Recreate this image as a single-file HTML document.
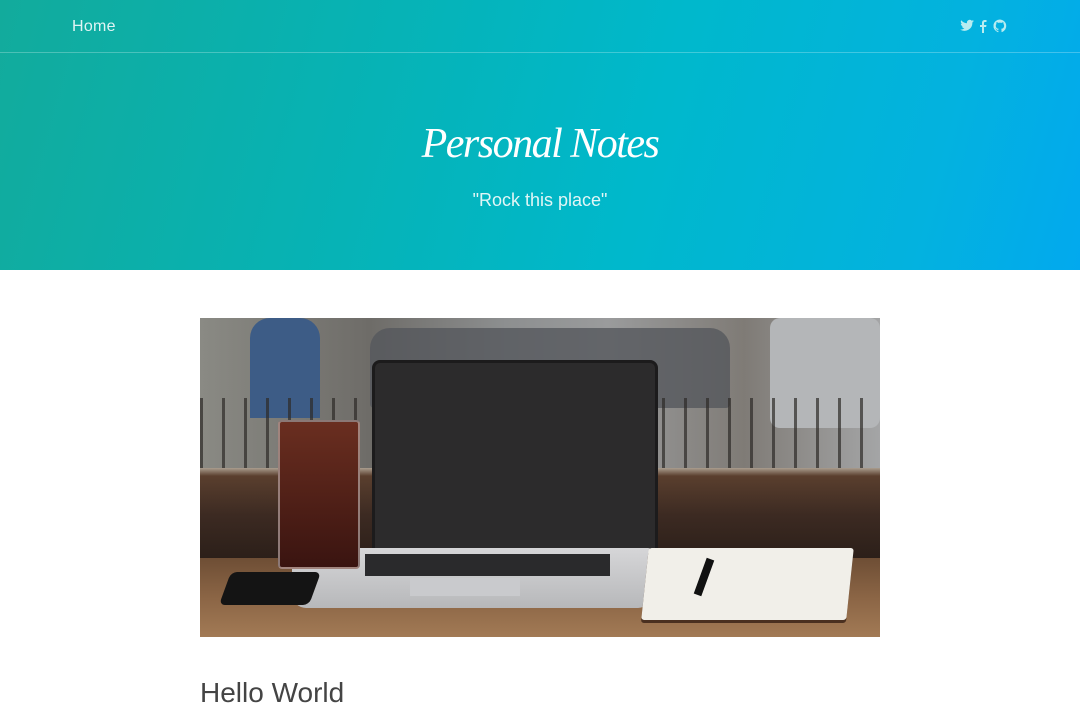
<!DOCTYPE html>
<html><head><meta charset="utf-8"><style>
body{margin:0;width:1080px;height:720px;overflow:hidden;background:#fff;font-family:"Liberation Sans",sans-serif}
.hd{position:absolute;left:0;top:0;width:1080px;height:270px;background:linear-gradient(105deg,#12ab9c 0%,#06b3b6 35%,#00b8cc 60%,#03b2df 85%,#02a9ee 100%)}
.nav{position:absolute;top:0;left:0;width:1080px;height:52px;border-bottom:1px solid rgba(255,255,255,.25)}
.home{position:absolute;left:72px;top:18px;color:#e0f4f4;font-size:16px;letter-spacing:.3px}
.t{position:absolute;left:0;width:1080px;text-align:center;color:#fff}
.img{position:absolute;left:200px;top:318px;width:680px;height:319px;overflow:hidden;background:#8a8580}
.img div{position:absolute}
</style></head><body>
<div class="hd">
<div class="nav"><div class="home">Home</div>
<svg style="position:absolute;left:960px;top:18px" width="50" height="16" viewBox="0 0 50 16" fill="#b8ecf0">
<path d="M14 3c-.5.2-1 .4-1.6.5.6-.4 1-.9 1.2-1.5-.5.3-1.1.5-1.8.7A2.8 2.8 0 0 0 7 5.2 8 8 0 0 1 1.2 2.2a2.8 2.8 0 0 0 .9 3.8c-.5 0-.9-.1-1.3-.4 0 1.4 1 2.5 2.3 2.8-.4.1-.9.1-1.3 0 .4 1.1 1.4 1.9 2.6 2A5.7 5.7 0 0 1 0 11.5 8 8 0 0 0 12.4 4.8V4.4c.6-.4 1.1-.9 1.6-1.4z"/>
<path d="M22 15V9h-2V7h2V5c0-2 1-3 3-3h1.5v2H25c-.8 0-1 .4-1 1v2h2.5l-.4 2H24v6z"/>
<path d="M40 1.5a6.5 6.5 0 0 0-2 12.7c.3 0 .4-.1.4-.3v-1.2c-1.8.4-2.2-.8-2.2-.8-.3-.8-.7-1-.7-1-.6-.4 0-.4 0-.4.6 0 1 .7 1 .7.6 1 1.5.7 1.9.5 0-.4.2-.7.4-.9-1.4-.2-3-.7-3-3.2 0-.7.3-1.3.7-1.7-.1-.2-.3-.8 0-1.7 0 0 .6-.2 1.8.7a6 6 0 0 1 3.2 0c1.2-.8 1.800-.7 1.8-.7.4.9.1 1.5.1 1.7.4.4.7 1 .7 1.7 0 2.5-1.5 3-3 3.2.2.2.4.6.4 1.2v1.8c0 .2.1.4.5.3A6.5 6.5 0 0 0 40 1.5z"/>
</svg></div>
<div class="t" style="top:120px;font-family:'Liberation Serif',serif;font-style:italic;font-size:42px;letter-spacing:-1.5px">Personal Notes</div>
<div class="t" style="top:190px;font-size:18px;color:#e2f6f6">"Rock this place"</div>
</div>
<div class="img">
<div style="left:0;top:0;width:680px;height:155px;background:linear-gradient(90deg,#8a8a84,#6e6c68 25%,#8d8f90 45%,#9a9b9c 60%,#7f7b76 80%,#a4a5a6)"></div>
<div style="left:170px;top:10px;width:360px;height:80px;background:#55585c;border-radius:20px 20px 4px 4px;opacity:.8"></div>
<div style="left:570px;top:0;width:110px;height:110px;background:#b4b6b8;border-radius:10px"></div>
<div style="left:50px;top:0;width:70px;height:100px;background:#3d5c86;border-radius:20px 20px 0 0"></div>
<div style="left:0;top:80px;width:680px;height:70px;background:repeating-linear-gradient(90deg,rgba(45,42,39,.7) 0 3px,transparent 3px 22px)"></div>
<div style="left:0;top:150px;width:680px;height:95px;background:linear-gradient(#aa9d8e 0,#5a3f2e 8px,#3c2a22 50%,#2a1e18)"></div>
<div style="left:0;top:240px;width:680px;height:79px;background:linear-gradient(#6e4e35,#8b6545 50%,#a27a55)"></div>
<div style="left:172px;top:42px;width:280px;height:192px;background:#2c2b2c;border-radius:8px 8px 0 0;border:3px solid #1c1b1c"></div>
<div style="left:92px;top:230px;width:360px;height:60px;background:linear-gradient(#d6d6d8,#b7b8ba);border-radius:4px 4px 14px 14px"></div>
<div style="left:165px;top:236px;width:245px;height:22px;background:#2a2a2c"></div>
<div style="left:210px;top:260px;width:110px;height:18px;background:#c9cacd"></div>
<div style="left:78px;top:102px;width:78px;height:145px;background:linear-gradient(#6a2e20,#3a1410);border:2px solid rgba(220,220,220,.5);border-radius:4px"></div>
<div style="left:25px;top:254px;width:90px;height:33px;background:#141414;border-radius:6px;transform:skewX(-20deg)"></div>
<div style="left:445px;top:230px;width:205px;height:72px;background:#f1efe9;border-radius:3px;transform:skewX(-6deg);box-shadow:0 3px 0 #4a3020"></div>
<div style="left:500px;top:240px;width:8px;height:38px;background:#111;transform:rotate(20deg)"></div>
</div>
<div style="position:absolute;left:200px;top:677px;font-size:28px;color:#444;font-family:'Liberation Sans',sans-serif">Hello World</div>
</body></html>
